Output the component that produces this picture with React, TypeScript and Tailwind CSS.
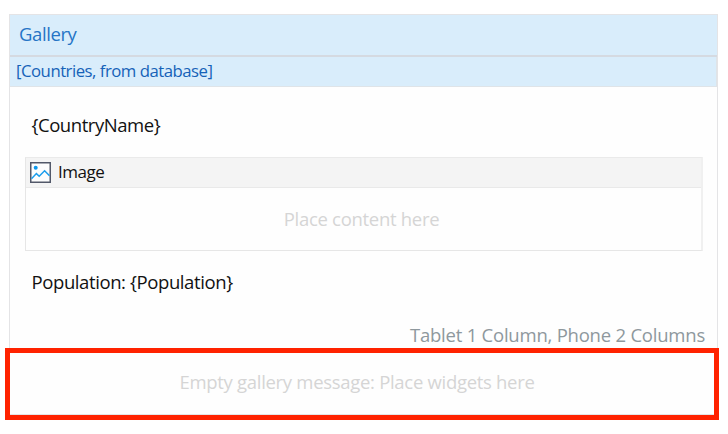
function ImageIcon() {
  return (
    <svg width="21" height="21" viewBox="0 0 21 21" fill="none" className="shrink-0">
      <rect x="0.75" y="0.75" width="19.5" height="19.5" fill="#fdfdfd" stroke="#525869" strokeWidth="1.5" />
      <circle cx="5.7" cy="5.7" r="2" fill="#0d99ee" />
      <path d="M1.5 16.8L6.4 11.6L9.2 14.2L14.6 8.8L19.5 13.7" stroke="#1b9dec" strokeWidth="1.5" />
    </svg>
  );
}

export default function App() {
  return (
    <main className="h-[434px] w-[728px] overflow-hidden bg-white pt-[14px] pl-[9px] font-['Open_Sans','Noto_Sans',sans-serif] text-[18.5px] leading-[26px] whitespace-nowrap text-[#111]">
      <section className="relative h-[401px] w-[709px] border border-[#e4e4e6] bg-[#fefefe]">
        <header className="h-[42px] border-b-2 border-[#d5dae1] bg-[#d9edfb] pt-[6px] pl-[9px] text-[#2574c6]">
          <span className="tracking-[-0.4px]">Gallery</span>
        </header>
        <div className="h-[30px] border-r border-b border-[#dfe4e8] bg-[#d9edfb] pt-[1px] pl-[6px] text-[16.75px] text-[#1662b8]">
          <span className="tracking-[-0.5px]">[Countries, from database]</span>
        </div>
        <div className="mt-[25px] pl-[21.5px]">
          <span className="tracking-[-0.45px]">{"{CountryName}"}</span>
        </div>
        <div className="mt-[19px] ml-[15px] h-[94px] w-[678px] border border-r-2 border-[#e6e6e6] border-t-[#eaeaea] border-r-[#f0f0f0]">
          <div className="flex h-[30px] items-center gap-[7px] border-b border-[#e9e9e9] bg-[#f4f4f4] pl-1 text-[17px]">
            <ImageIcon />
            <span className="pb-[2px] tracking-[-0.5px]">Image</span>
          </div>
          <div className="pt-[18px] pr-[4px] text-center text-[#d5d5d5]">
            <span className="tracking-[-0.3px]">Place content here</span>
          </div>
        </div>
        <div className="mt-[18px] pl-[21.5px]">
          <span className="tracking-[-0.4px]">{"Population: {Population}"}</span>
        </div>
        <div className="mt-[27px] pr-[12px] text-right text-[#8e989d]">
          <span className="tracking-[-0.22px]">Tablet 1 Column, Phone 2 Columns</span>
        </div>
        <div className="absolute top-[333px] left-[-5px] h-[72px] w-[714px] border-[5px] border-[#ff2200] pt-[16px] pr-[10px] text-center text-[#d5d5d5]">
          <span className="tracking-[-0.3px]">Empty gallery message: Place widgets here</span>
        </div>
      </section>
    </main>
  );
}
